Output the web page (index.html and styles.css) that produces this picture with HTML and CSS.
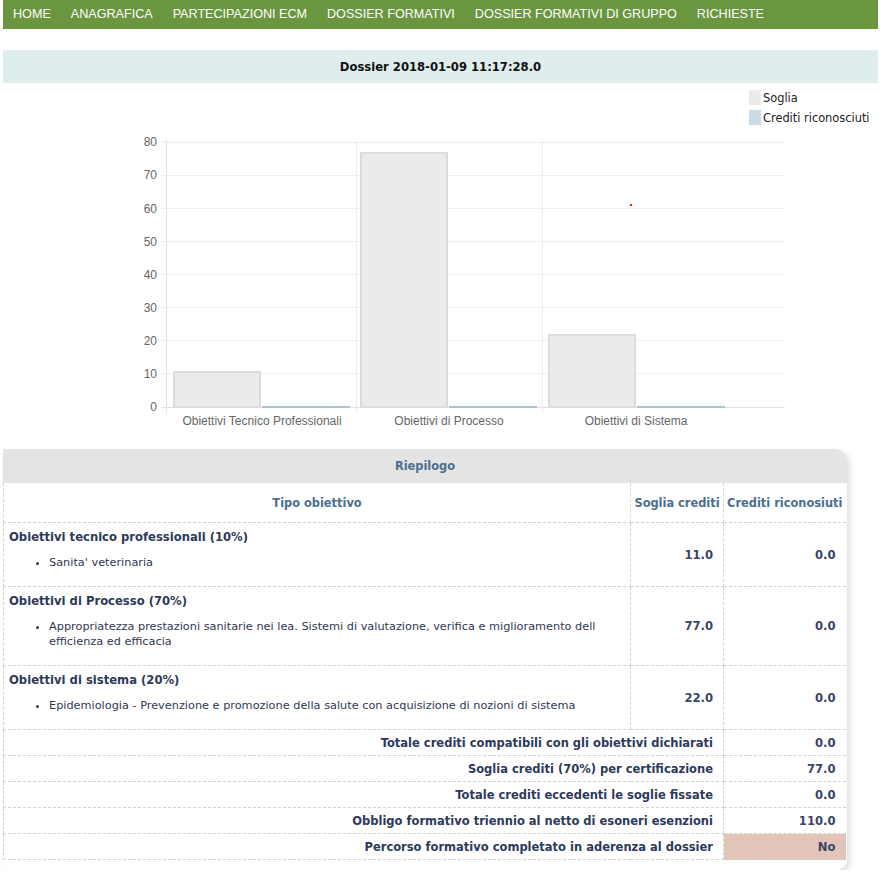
FILE: index.html
```html
<!DOCTYPE html>
<html lang="it">
<head>
<meta charset="utf-8">
<title>Dossier</title>
<link rel="stylesheet" href="styles.css">
</head>
<body>
<div class="page">
  <nav class="nav">
    <a class="nav-item">HOME</a>
    <a class="nav-item">ANAGRAFICA</a>
    <a class="nav-item">PARTECIPAZIONI ECM</a>
    <a class="nav-item">DOSSIER FORMATIVI</a>
    <a class="nav-item">DOSSIER FORMATIVI DI GRUPPO</a>
    <a class="nav-item">RICHIESTE</a>
  </nav>

  <div class="title-bar">Dossier 2018-01-09 11:17:28.0</div>

  <div class="chart">
    <svg class="chart-svg" width="875" height="366" viewBox="0 0 875 366">
      <g transform="translate(-3,-83)">
        <!-- legend -->
        <rect x="749" y="90" width="12" height="15" fill="#ebebeb"/>
        <text class="legend-text" x="763" y="102">Soglia</text>
        <rect x="749" y="110" width="12" height="15" fill="#c9dbe5"/>
        <text class="legend-text" x="763" y="122">Crediti riconosciuti</text>

        <!-- horizontal grid -->
        <g stroke="#efefef" stroke-width="1">
          <line x1="162" y1="142.5" x2="785" y2="142.5"/>
          <line x1="162" y1="175.5" x2="785" y2="175.5"/>
          <line x1="162" y1="208.5" x2="785" y2="208.5"/>
          <line x1="162" y1="241.5" x2="785" y2="241.5"/>
          <line x1="162" y1="274.5" x2="785" y2="274.5"/>
          <line x1="162" y1="307.5" x2="785" y2="307.5"/>
          <line x1="162" y1="340.5" x2="785" y2="340.5"/>
          <line x1="162" y1="373.5" x2="785" y2="373.5"/>
        </g>
        <line x1="162" y1="407.5" x2="785" y2="407.5" stroke="#e2e2e2"/>
        <!-- vertical grid -->
        <g stroke="#ececec" stroke-width="1">
          <line x1="356.5" y1="140" x2="356.5" y2="413"/>
          <line x1="542.5" y1="140" x2="542.5" y2="413"/>
        </g>
        <line x1="166.5" y1="140" x2="166.5" y2="413" stroke="#e0e0e0"/>

        <!-- y labels -->
        <g class="axis-text" text-anchor="end">
          <text x="157" y="146">80</text>
          <text x="157" y="179">70</text>
          <text x="157" y="213">60</text>
          <text x="157" y="246">50</text>
          <text x="157" y="279">40</text>
          <text x="157" y="312">30</text>
          <text x="157" y="345">20</text>
          <text x="157" y="378">10</text>
          <text x="157" y="411">0</text>
        </g>

        <!-- bars: soglia -->
        <g fill="#ebebeb" stroke="#dcdcdc" stroke-width="2">
          <rect x="174" y="372" width="86" height="35"/>
          <rect x="361" y="153" width="86" height="254"/>
          <rect x="549" y="335" width="86" height="72"/>
        </g>
        <!-- bars: crediti (zero) -->
        <g fill="#a9c6cf">
          <rect x="262" y="406" width="88" height="2"/>
          <rect x="449" y="406" width="88" height="2"/>
          <rect x="637" y="406" width="88" height="2"/>
        </g>

        <rect x="630" y="204" width="2" height="2" fill="#e82010"/>

        <!-- x labels -->
        <g class="axis-text" text-anchor="middle">
          <text x="262" y="425">Obiettivi Tecnico Professionali</text>
          <text x="449" y="425">Obiettivi di Processo</text>
          <text x="636" y="425">Obiettivi di Sistema</text>
        </g>
      </g>
    </svg>
  </div>

  <div class="panel">
    <div class="panel-head">Riepilogo</div>
    <table class="summary">
      <colgroup>
        <col class="c1">
        <col class="c2">
        <col class="c3">
      </colgroup>
      <thead>
        <tr>
          <th>Tipo obiettivo</th>
          <th>Soglia crediti</th>
          <th>Crediti riconosiuti</th>
        </tr>
      </thead>
      <tbody>
        <tr>
          <td class="obj">
            <div class="obj-title">Obiettivi tecnico professionali (10%)</div>
            <ul class="obj-list"><li>Sanita' veterinaria</li></ul>
          </td>
          <td class="num">11.0</td>
          <td class="num">0.0</td>
        </tr>
        <tr>
          <td class="obj">
            <div class="obj-title">Obiettivi di Processo (70%)</div>
            <ul class="obj-list"><li>Appropriatezza prestazioni sanitarie nei lea. Sistemi di valutazione, verifica e miglioramento dell efficienza ed efficacia</li></ul>
          </td>
          <td class="num">77.0</td>
          <td class="num">0.0</td>
        </tr>
        <tr>
          <td class="obj">
            <div class="obj-title">Obiettivi di sistema (20%)</div>
            <ul class="obj-list"><li>Epidemiologia - Prevenzione e promozione della salute con acquisizione di nozioni di sistema</li></ul>
          </td>
          <td class="num">22.0</td>
          <td class="num">0.0</td>
        </tr>
        <tr class="total">
          <td colspan="2" class="label">Totale crediti compatibili con gli obiettivi dichiarati</td>
          <td class="num">0.0</td>
        </tr>
        <tr class="total">
          <td colspan="2" class="label">Soglia crediti (70%) per certificazione</td>
          <td class="num">77.0</td>
        </tr>
        <tr class="total">
          <td colspan="2" class="label">Totale crediti eccedenti le soglie fissate</td>
          <td class="num">0.0</td>
        </tr>
        <tr class="total">
          <td colspan="2" class="label">Obbligo formativo triennio al netto di esoneri esenzioni</td>
          <td class="num">110.0</td>
        </tr>
        <tr class="total">
          <td colspan="2" class="label">Percorso formativo completato in aderenza al dossier</td>
          <td class="num no">No</td>
        </tr>
      </tbody>
    </table>
  </div>
</div>
</body>
</html>
```

FILE: styles.css
```css
html, body {
  margin: 0;
  padding: 0;
  background: #ffffff;
}

body {
  font-family: "DejaVu Sans", Verdana, sans-serif;
  font-size: 11.3px;
  color: #303850;
}

.page {
  width: 875px;
  margin-left: 3px;
}

.nav {
  display: flex;
  align-items: center;
  height: 29px;
  background: #6a963f;
}

.nav-item {
  font-family: "Liberation Sans", Arial, sans-serif;
  font-size: 12.6px;
  color: #ffffff;
  padding: 0 10px;
  line-height: 27px;
  text-decoration: none;
}

.title-bar {
  margin-top: 21px;
  height: 33px;
  line-height: 35px;
  background: #e0eded;
  text-align: center;
  font-weight: bold;
  font-size: 11.6px;
  color: #111111;
}

.chart {
  height: 366px;
}

.chart-svg {
  display: block;
}

.legend-text {
  font-family: "DejaVu Sans", Verdana, sans-serif;
  font-size: 11.4px;
  fill: #222222;
}

.axis-text {
  font-family: "Liberation Sans", Arial, sans-serif;
  font-size: 12px;
  fill: #666666;
}

.panel {
  width: 842px;
  padding: 0 2px 10px 0;
  background: #ffffff;
  border-radius: 0 12px 10px 0;
  box-shadow: 3px 3px 6px rgba(0, 0, 0, 0.13);
}

.panel-head {
  height: 34px;
  line-height: 34px;
  background: #e4e4e4;
  border-radius: 0 12px 0 0;
  text-align: center;
  font-weight: bold;
  font-size: 11.4px;
  color: #4b6f91;
  margin-right: -2px;
}

.summary {
  width: 842px;
  border-collapse: collapse;
  table-layout: fixed;
}

.c1 { width: 627px; }
.c2 { width: 93px; }
.c3 { width: 122px; }

.summary th,
.summary td {
  border: 1px dashed #d3d3d3;
}

.summary tr > :last-child {
  border-right: none;
}

.summary thead th {
  border-top: none;
  height: 39px;
  padding: 0 2px;
  font-weight: bold;
  font-size: 11.4px;
  color: #4b6f91;
  text-align: center;
  white-space: nowrap;
}

.obj {
  padding: 6px 5px;
  vertical-align: top;
}

.obj-title {
  font-weight: bold;
  font-size: 11.6px;
  line-height: 16px;
  color: #2d3a5a;
}

.obj-list {
  margin: 10px 0 10px 0;
  padding-left: 40px;
  line-height: 15px;
  color: #303850;
}

.num {
  text-align: right;
  padding: 0 10px 0 4px;
  font-weight: bold;
  font-size: 11.6px;
  color: #3a4466;
  vertical-align: middle;
}

.total td {
  height: 25px;
  padding-top: 0;
  padding-bottom: 0;
}

.total .label {
  text-align: right;
  padding-right: 10px;
  font-weight: bold;
  font-size: 11.5px;
  color: #2d3a5a;
}

.total .no {
  background: #e2c4b8;
}
```
